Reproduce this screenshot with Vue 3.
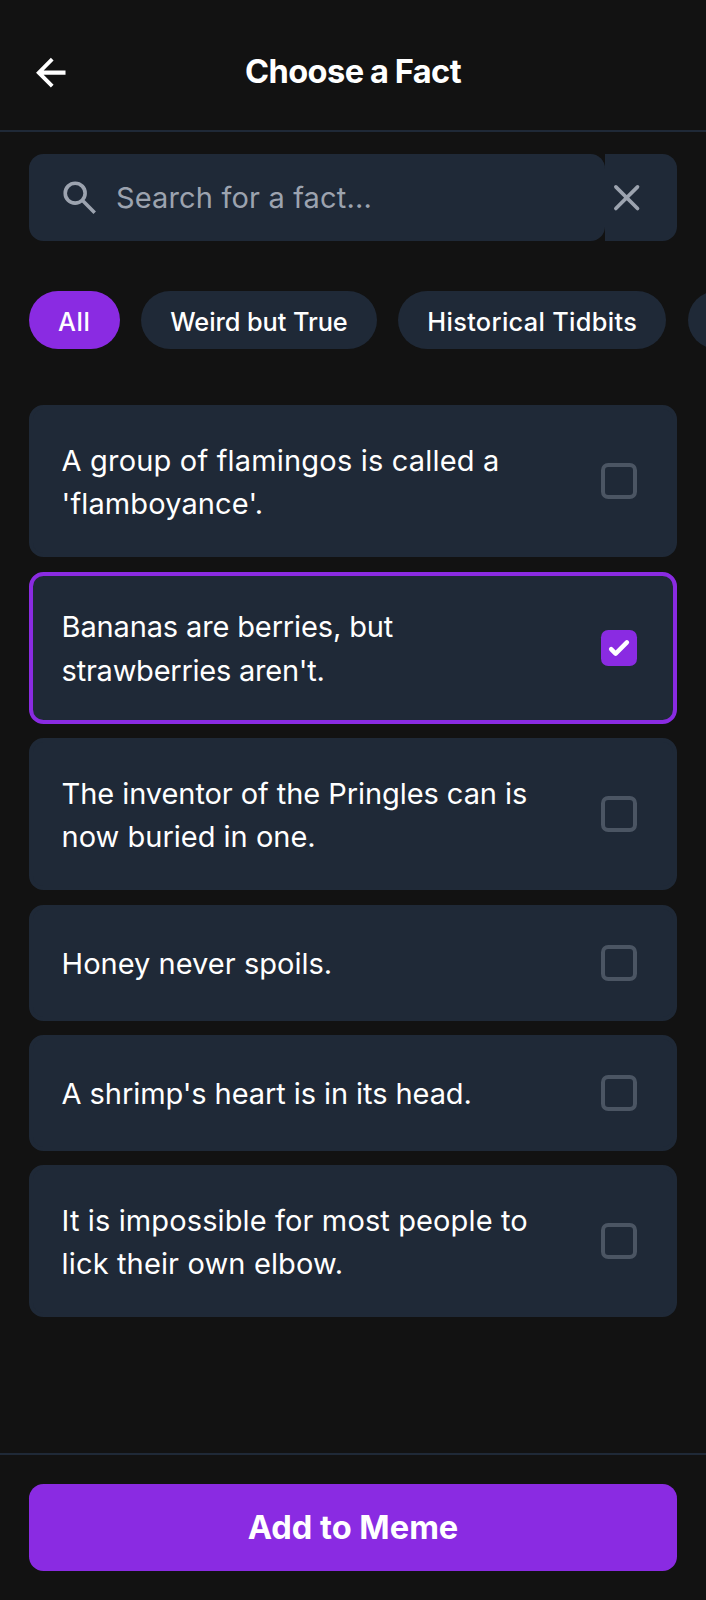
<script setup>
import { ref } from 'vue'

const categories = [
  { label: 'All', tracking: 0.65 },
  { label: 'Weird but True', tracking: -0.06 },
  { label: 'Historical Tidbits', tracking: 0.33 },
  { label: '', tracking: 0 },
]
const activeCategory = ref('All')
const query = ref('')

const facts = [
  [
    { text: 'A group of flamingos is called a', tracking: 0.18 },
    { text: "'flamboyance'.", tracking: 0.12 },
  ],
  [
    { text: 'Bananas are berries, but', tracking: -0.14 },
    { text: "strawberries aren't.", tracking: -0.24 },
  ],
  [
    { text: 'The inventor of the Pringles can is', tracking: -0.07 },
    { text: 'now buried in one.', tracking: 0.0 },
  ],
  [{ text: 'Honey never spoils.', tracking: 0.02 }],
  [{ text: "A shrimp's heart is in its head.", tracking: -0.08 }],
  [
    { text: 'It is impossible for most people to', tracking: 0.12 },
    { text: 'lick their own elbow.', tracking: 0.14 },
  ],
]
const selected = ref(1)
</script>

<template>
  <div class="screen">
    <header class="header">
      <button class="back" aria-label="Back">
        <svg viewBox="0 0 24 24" fill="currentColor">
          <path d="M20.2 10.8H8.1l5.5-5.5L12.1 3.8 3.9 12l8.2 8.2 1.5-1.5-5.5-5.5h12.1v-2.4z" />
        </svg>
      </button>
      <h1 class="title">Choose a Fact</h1>
    </header>

    <div class="search">
      <label class="field">
        <svg class="search-icon" viewBox="0 -960 960 960" fill="currentColor">
          <path d="M784-120 532-372q-30 24-69 38t-83 14q-109 0-184.5-75.5T120-580q0-109 75.5-184.5T380-840q109 0 184.5 75.5T640-580q0 44-14 83t-38 69l252 252-56 56ZM380-400q75 0 127.5-52.5T560-580q0-75-52.5-127.5T380-760q-75 0-127.5 52.5T200-580q0 75 52.5 127.5T380-400Z" />
        </svg>
        <input v-model="query" class="input" type="text" placeholder="Search for a fact..." />
      </label>
      <button class="clear" aria-label="Clear" @click="query = ''">
        <svg viewBox="0 0 24 24" fill="none" stroke="currentColor" stroke-width="2" stroke-linecap="round">
          <path d="M6 6l12 12M18 6L6 18" />
        </svg>
      </button>
    </div>

    <nav class="chips">
      <button
        v-for="c in categories"
        :key="c.label"
        class="chip"
        :class="{ active: c.label === activeCategory }"
        :style="{ letterSpacing: c.tracking + 'px' }"
        @click="activeCategory = c.label"
      >{{ c.label }}</button>
    </nav>

    <main class="list">
      <div
        v-for="(lines, i) in facts"
        :key="i"
        class="card"
        :class="{ selected: i === selected }"
        @click="selected = i"
      >
        <p class="fact">
          <span
            v-for="line in lines"
            :key="line.text"
            class="line"
            :style="{ letterSpacing: line.tracking + 'px' }"
          >{{ line.text }}</span>
        </p>
        <span class="box">
          <svg v-if="i === selected" viewBox="0 0 16 16" fill="#fff">
            <path d="M12.207 4.793a1 1 0 010 1.414l-5 5a1 1 0 01-1.414 0l-2-2a1 1 0 011.414-1.414L6.5 9.086l4.293-4.293a1 1 0 011.414 0z" />
          </svg>
        </span>
      </div>
    </main>

    <footer class="footer">
      <button class="submit">Add to Meme</button>
    </footer>
  </div>
</template>

<style>
html,
body {
  background: #121212;
}
</style>

<style scoped>
.screen {
  display: flex;
  flex-direction: column;
  width: 706px;
  height: 1600px;
  overflow: hidden;
  box-sizing: border-box;
  background: #121212;
  color: #fff;
  font-family: Inter, "Liberation Sans", sans-serif;
  font-size: 29px;
}

.screen * {
  box-sizing: border-box;
}

button {
  border: 0;
  padding: 0;
  background: none;
  color: inherit;
  font: inherit;
}

svg {
  display: block;
}

.header {
  flex: none;
  display: flex;
  align-items: center;
  height: 132px;
  padding: 14.4px 29px 0;
  border-bottom: 2px solid #1f2937;
}

.back,
.back svg {
  width: 43.4px;
  height: 43.4px;
}

.title {
  flex: 1;
  margin: 0;
  padding: 0 43.4px 2px 0;
  font-size: 32.6px;
  line-height: 41px;
  font-weight: 700;
  letter-spacing: -0.55px;
  word-spacing: -0.8px;
  text-align: center;
}

.search {
  flex: none;
  display: flex;
  height: 87px;
  margin: 22px 29px 0;
}

.field {
  flex: 1;
  display: flex;
  align-items: center;
  padding-left: 29px;
  border-radius: 14.5px;
  background: #1f2937;
}

.search-icon {
  flex: none;
  width: 43.4px;
  height: 43.4px;
  color: #9ca3af;
}

.input {
  flex: 1;
  min-width: 0;
  height: 87px;
  padding: 0 0 0 14.5px;
  border: 0;
  outline: 0;
  background: transparent;
  color: #fff;
  font: inherit;
  letter-spacing: 0.16px;
}

.input::placeholder {
  color: #9ca3af;
  opacity: 1;
}

.clear {
  display: flex;
  align-items: center;
  width: 72.4px;
  border-radius: 0 14.5px 14.5px 0;
  background: #1f2937;
  color: #9ca3af;
}

.clear svg {
  width: 43.4px;
  height: 43.4px;
}

.chips {
  flex: none;
  display: flex;
  gap: 21.7px;
  padding: 50.2px 0 56.1px 29px;
  overflow: hidden;
}

.chip {
  flex: none;
  height: 58px;
  padding: 4px 29px 0;
  border-radius: 29px;
  background: #1f2937;
  font-size: 25.3px;
  line-height: 36px;
  font-weight: 500;
  white-space: nowrap;
}

.chip.active {
  background: #8a2be2;
}

.list {
  flex: 1;
  display: flex;
  flex-direction: column;
  gap: 14.48px;
  padding: 0 29px;
}

.card {
  flex: none;
  display: flex;
  align-items: center;
  justify-content: space-between;
  min-height: 115.8px;
  padding: 27.9px 36px 27.9px 28.6px;
  border: 4px solid #1f2937;
  border-radius: 14.5px;
  background: #1f2937;
}

.card.selected {
  border-color: #8a2be2;
}

.fact {
  margin: 0;
  padding-top: 1.4px;
  line-height: 43.44px;
}

.line {
  display: block;
  white-space: nowrap;
}

.box {
  flex: none;
  width: 36px;
  height: 36px;
  border: 4px solid #4b5563;
  border-radius: 7.2px;
}

.selected .box {
  border: 0;
  background: #8a2be2;
}

.footer {
  flex: none;
  height: 147px;
  padding: 29px 29px 0;
  border-top: 2px solid #1f2937;
}

.submit {
  display: block;
  width: 648px;
  height: 87px;
  padding-bottom: 2px;
  border-radius: 14.5px;
  background: #8a2be2;
  font-size: 32.6px;
  font-weight: 700;
}
</style>
